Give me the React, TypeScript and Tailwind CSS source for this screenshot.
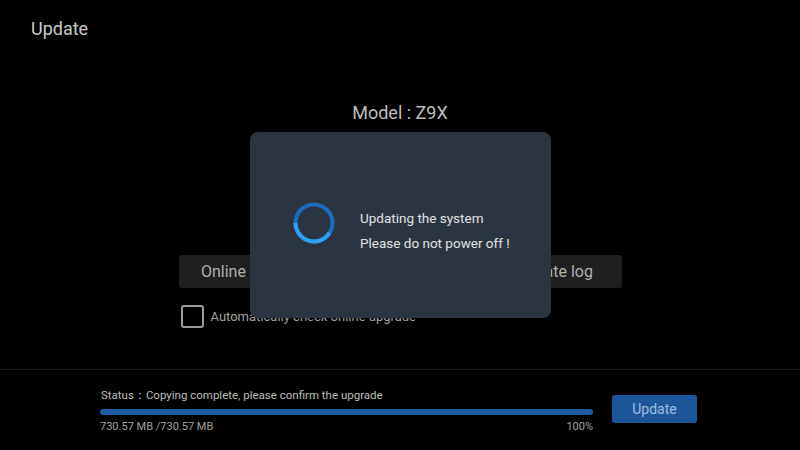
import React from "react";

const font = { fontFamily: "Roboto, 'Noto Sans', sans-serif" };

function Spinner() {
  // arc from 9 o'clock down round to ~4 o'clock, lighter blue
  return (
    <svg width="42" height="42" viewBox="0 0 42 42" className="ml-[1px] shrink-0">
      <circle cx="21" cy="21" r="18.5" fill="none" stroke="#1e6cbd" strokeWidth="4" />
      <path
        d="M2.5 21 A18.5 18.5 0 0 0 36.5 31"
        fill="none"
        stroke="#2aa3ef"
        strokeWidth="4"
      />
    </svg>
  );
}

function MenuButton({ label, width }: { label: string; width: string }) {
  return (
    <button
      className={`flex h-[33px] items-center justify-center rounded-[3px] bg-[#1f1f1f] text-[16px] text-[#b0b0b0] ${width}`}
    >
      {label}
    </button>
  );
}

export default function App() {
  return (
    <div
      className="relative flex h-[450px] w-[800px] flex-col overflow-hidden bg-black"
      style={font}
    >
      <header className="pl-[31px] pt-[17px] text-[18px] leading-6 text-[#c8c8c8]">
        Update
      </header>

      <main className="flex flex-1 flex-col items-center">
        <h1 className="mt-[60px] text-[18px] leading-6 text-[#bdbdbd]">Model : Z9X</h1>
        <p className="mt-5 text-[16px] leading-5 text-[#999]">Version : V001.002.003</p>

        <div className="mt-[90px] flex w-[443px] gap-2">
          <MenuButton label="Online upgrade" width="w-[152px]" />
          <MenuButton label="Local upgrade" width="w-[141px]" />
          <MenuButton label="Update log" width="w-[134px]" />
        </div>

        <label className="mt-[17px] flex w-[443px] items-center gap-[7px] pl-[2px]">
          <span className="h-[23px] w-[23px] rounded-[3px] border-2 border-[#9a9a9a]" />
          <span className="text-[13px] text-[#a0a0a0]">Automatically check online upgrade</span>
        </label>
      </main>

      <footer className="flex h-[81px] border-t border-[#1e1e1e] pl-[100px] pr-[103px]">
        <div className="flex w-[493px] flex-col pt-[17px]">
          <p className="pl-px text-[11.5px] leading-4 text-[#bcbcbc]">
            Status：Copying complete, please confirm the upgrade
          </p>
          <div className="mt-[6px] h-[6px] rounded-full bg-[#1f5ba3]" />
          <div className="mt-[4px] flex justify-between text-[11px] leading-4 text-[#a0a0a0]">
            <span>730.57 MB /730.57 MB</span>
            <span>100%</span>
          </div>
        </div>
        <button className="ml-auto mt-[25px] h-[28px] w-[85px] rounded-[3px] bg-[#1d579b] text-[14px] text-[#9fbde0]">
          Update
        </button>
      </footer>

      {/* updating dialog */}
      <div className="absolute left-[250px] top-[132px] flex h-[186px] w-[301px] items-start rounded-[8px] bg-[#2b3541] pl-[42px] pt-[70px]">
        <Spinner />
        <div className="ml-[25px] mt-[6px] text-[13.5px] leading-5 text-[#e2e2e2]">
          <p>Updating the system</p>
          <p className="mt-[5px]">Please do not power off !</p>
        </div>
      </div>
    </div>
  );
}
